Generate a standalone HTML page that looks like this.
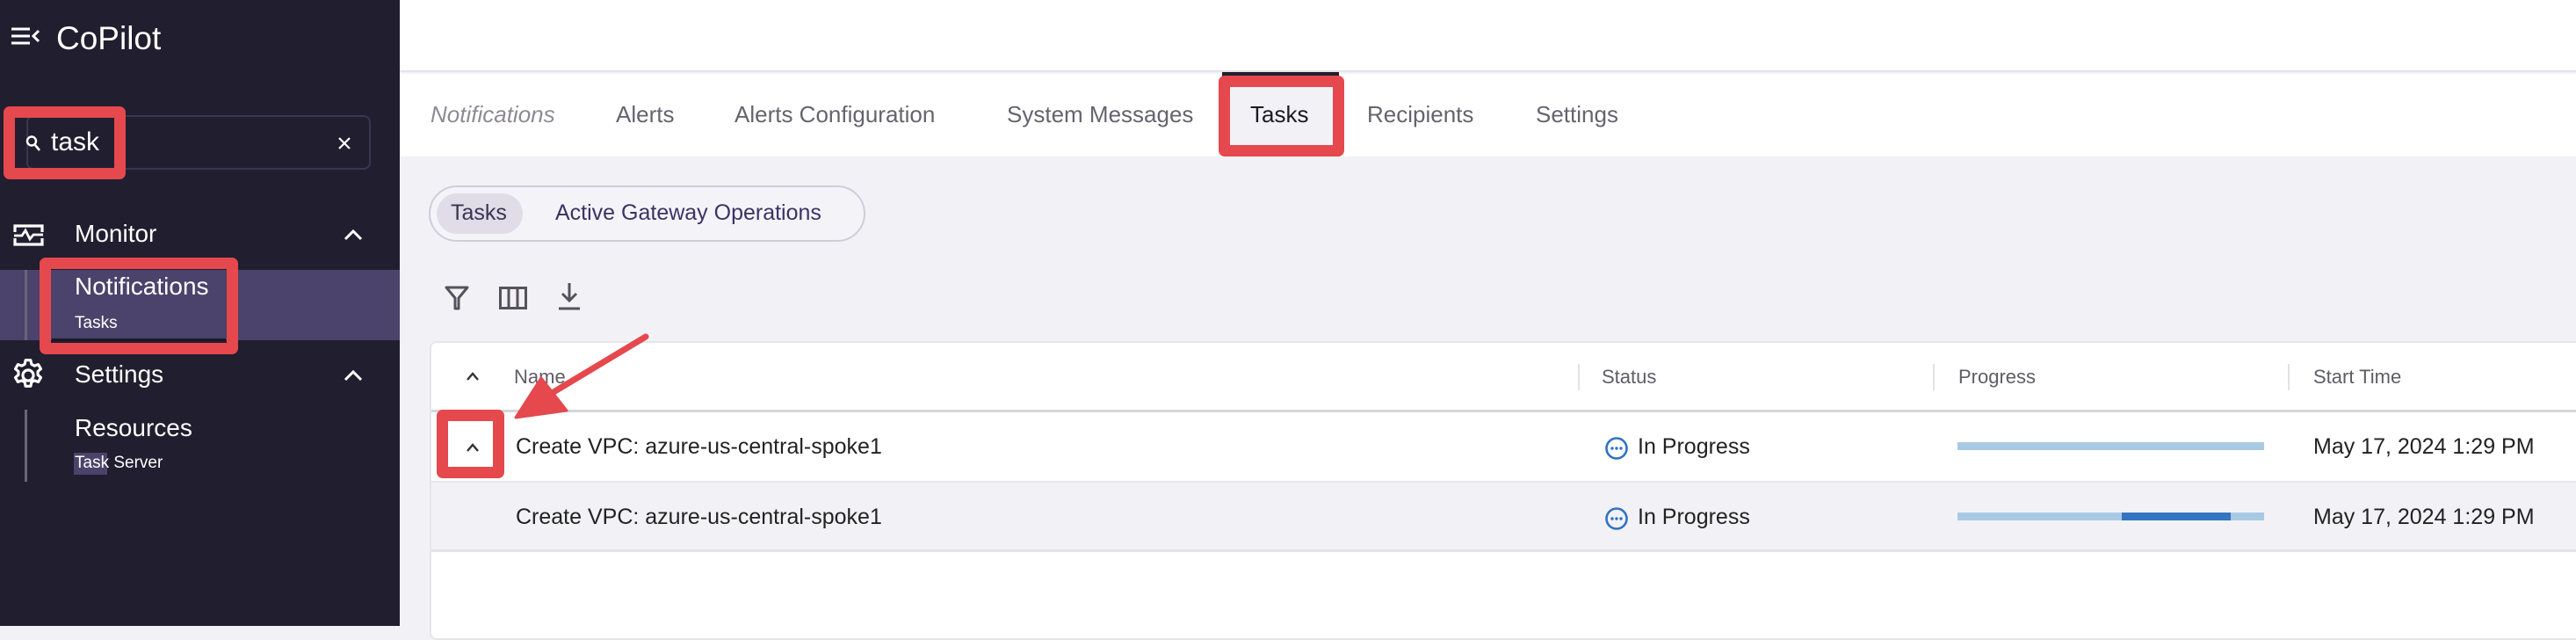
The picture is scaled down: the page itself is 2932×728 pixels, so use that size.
<!DOCTYPE html>
<html><head><meta charset="utf-8"><style>
*{margin:0;padding:0;box-sizing:border-box}
body{width:2932px;height:712px;position:relative;overflow:hidden;background:#f2f2f6;font-family:"Liberation Sans",sans-serif}
.a{position:absolute;white-space:nowrap}
.sb{left:0;top:0;width:455px;height:712px;background:#211e2f}
.w{color:#fff}
.red{position:absolute;border:13px solid #e5484d;border-radius:7px}
.tab{top:115px;font-size:26px;color:#66636f}
.hd{font-size:22px;color:#5f5c66;top:416px}
.cell{font-size:25px;color:#222}
</style></head><body>
<div class="a sb"></div>
<svg class="a" style="left:12px;top:31px" width="34" height="20" viewBox="0 0 34 20"><path d="M1 2h21M1 10h21M1 18h21" stroke="#fff" stroke-width="3"/><path d="M32 4l-6 6 6 6" stroke="#fff" stroke-width="3" fill="none"/></svg>
<div class="a w" style="left:64px;top:23px;font-size:37px">CoPilot</div>
<div class="a" style="left:30px;top:131px;width:392px;height:62px;border:2px solid #3a3552;border-radius:8px"></div>
<div class="red" style="left:4px;top:121px;width:139px;height:83px"></div>
<svg class="a" style="left:29px;top:153px" width="18" height="20" viewBox="0 0 18 20"><circle cx="7" cy="7.5" r="5" stroke="#fff" stroke-width="2.4" fill="none"/><path d="M11 12l5 6" stroke="#fff" stroke-width="2.6"/></svg>
<div class="a w" style="left:58px;top:145px;font-size:30px">task</div>
<svg class="a" style="left:384px;top:155px" width="16" height="16"><path d="M2 2l12 12M14 2L2 14" stroke="#fff" stroke-width="2.2"/></svg>
<svg class="a" style="left:15px;top:254px" width="35" height="27" viewBox="0 0 35 27"><path d="M2 10V3h31v7M2 17v7h31v-7" stroke="#fff" stroke-width="3.2" fill="none"/><path d="M1 14h9l4-6 5 10 4-5h11" stroke="#fff" stroke-width="2.8" fill="none"/></svg>
<div class="a w" style="left:85px;top:250px;font-size:28px">Monitor</div>
<svg class="a" style="left:391px;top:259px" width="22" height="16"><path d="M2 13l9-9 9 9" stroke="#fff" stroke-width="3" fill="none"/></svg>
<div class="a" style="left:0;top:307px;width:455px;height:80px;background:#4b436b"></div>
<div class="a" style="left:28px;top:307px;width:3px;height:80px;background:#6a6576"></div>
<div class="red" style="left:45px;top:293px;width:226px;height:110px"></div>
<div class="a" style="left:59px;top:385px;width:198px;height:3px;background:#1b1828"></div>
<div class="a w" style="left:85px;top:310px;font-size:28px">Notifications</div>
<div class="a w" style="left:85px;top:357px;font-size:19px">Tasks</div>
<svg class="a" style="left:12px;top:408px" width="40" height="38" viewBox="1 1 22 22"><path d="M12 8.5a3.5 3.5 0 1 0 0 7 3.5 3.5 0 0 0 0-7z M10.3 2h3.4l.5 2.6 2 1.1 2.5-.9 1.7 2.9-2 1.7v2.3l2 1.7-1.7 2.9-2.5-.9-2 1.1-.5 2.6h-3.4l-.5-2.6-2-1.1-2.5.9-1.7-2.9 2-1.7V9.4l-2-1.7 1.7-2.9 2.5.9 2-1.1z" stroke="#fff" stroke-width="1.8" fill="none" stroke-linejoin="round"/></svg>
<div class="a w" style="left:85px;top:410px;font-size:28px">Settings</div>
<svg class="a" style="left:391px;top:419px" width="22" height="16"><path d="M2 13l9-9 9 9" stroke="#fff" stroke-width="3" fill="none"/></svg>
<div class="a" style="left:28px;top:466px;width:3px;height:82px;background:#6a6576"></div>
<div class="a w" style="left:85px;top:471px;font-size:28px">Resources</div>
<div class="a" style="left:84px;top:515px;width:38px;height:25px;background:#4b436b"></div>
<div class="a w" style="left:85px;top:516px;font-size:19px">Task Server</div>

<div class="a" style="left:455px;top:0;width:2477px;height:82px;background:#fff;border-bottom:2px solid #e4e4e8"></div>
<div class="a" style="left:455px;top:84px;width:2477px;height:94px;background:#fff"></div>
<div class="a" style="left:1391px;top:82px;width:133px;height:6px;background:#211e2f"></div>
<div class="a tab" style="left:490px;font-style:italic;color:#8d8a94">Notifications</div>
<div class="a tab" style="left:701px">Alerts</div>
<div class="a tab" style="left:836px">Alerts Configuration</div>
<div class="a tab" style="left:1146px">System Messages</div>
<div class="a" style="left:1400px;top:97px;width:117px;height:68px;background:#f2f2f6"></div>
<div class="red" style="left:1387px;top:86px;width:143px;height:92px"></div>
<div class="a tab" style="left:1423px;color:#1b1a22">Tasks</div>
<div class="a tab" style="left:1556px">Recipients</div>
<div class="a tab" style="left:1748px">Settings</div>

<div class="a" style="left:488px;top:211px;width:497px;height:64px;border:2px solid #cfcdd6;border-radius:32px;background:#f4f4f8"></div>
<div class="a" style="left:497px;top:220px;width:98px;height:46px;border-radius:23px;background:#e0dde9"></div>
<div class="a" style="left:513px;top:228px;font-size:25px;color:#3a3450">Tasks</div>
<div class="a" style="left:632px;top:228px;font-size:25px;color:#3c3264">Active Gateway Operations</div>

<svg class="a" style="left:505px;top:324px" width="30" height="30" viewBox="0 0 30 30"><path d="M3 3h24l-10 12v12h-4V15z" fill="none" stroke="#55525c" stroke-width="3" stroke-linejoin="round"/></svg>
<svg class="a" style="left:568px;top:326px" width="32" height="26"><rect x="1.5" y="1.5" width="29" height="23" fill="none" stroke="#55525c" stroke-width="3"/><path d="M11 2v22M21 2v22" stroke="#55525c" stroke-width="3"/></svg>
<svg class="a" style="left:635px;top:320px" width="26" height="34"><path d="M13 2v20M5 14l8 8 8-8" fill="none" stroke="#55525c" stroke-width="3"/><path d="M1 31h24" stroke="#55525c" stroke-width="3"/></svg>

<div class="a" style="left:489px;top:388px;width:2450px;height:340px;background:#fff;border:2px solid #e6e6ea;border-radius:8px"></div>
<div class="a" style="left:491px;top:466px;width:2441px;height:3px;background:#d6d6dc"></div>
<div class="a" style="left:491px;top:547px;width:2441px;height:81px;background:#f2f2f6;border-top:2px solid #e6e6ea;border-bottom:3px solid #e4e4e8"></div>
<svg class="a" style="left:530px;top:422px" width="16" height="12"><path d="M2 10l6-7 6 7" stroke="#333" stroke-width="2.4" fill="none"/></svg>
<div class="a hd" style="left:585px">Name</div>
<div class="a" style="left:1796px;top:414px;width:2px;height:30px;background:#e2e2e6"></div>
<div class="a" style="left:2200px;top:414px;width:2px;height:30px;background:#e2e2e6"></div>
<div class="a" style="left:2604px;top:414px;width:2px;height:30px;background:#e2e2e6"></div>
<div class="a hd" style="left:1823px">Status</div>
<div class="a hd" style="left:2229px">Progress</div>
<div class="a hd" style="left:2633px">Start Time</div>

<div class="a cell" style="left:587px;top:494px">Create VPC: azure-us-central-spoke1</div>
<div class="a cell" style="left:587px;top:574px">Create VPC: azure-us-central-spoke1</div>
<svg class="a" style="left:1826px;top:496px" width="28" height="28"><circle cx="14" cy="14" r="11.5" fill="none" stroke="#2f72c4" stroke-width="2.6"/><circle cx="9" cy="14" r="1.7" fill="#2f72c4"/><circle cx="14" cy="14" r="1.7" fill="#2f72c4"/><circle cx="19" cy="14" r="1.7" fill="#2f72c4"/></svg>
<svg class="a" style="left:1826px;top:576px" width="28" height="28"><circle cx="14" cy="14" r="11.5" fill="none" stroke="#2f72c4" stroke-width="2.6"/><circle cx="9" cy="14" r="1.7" fill="#2f72c4"/><circle cx="14" cy="14" r="1.7" fill="#2f72c4"/><circle cx="19" cy="14" r="1.7" fill="#2f72c4"/></svg>
<div class="a cell" style="left:1864px;top:494px">In Progress</div>
<div class="a cell" style="left:1864px;top:574px">In Progress</div>
<div class="a" style="left:2228px;top:503px;width:349px;height:9px;background:#a8c9e4"></div>
<div class="a" style="left:2228px;top:583px;width:349px;height:9px;background:#a8c9e4"></div>
<div class="a" style="left:2415px;top:583px;width:124px;height:9px;background:#3474c0"></div>
<div class="a cell" style="left:2633px;top:494px">May 17, 2024 1:29 PM</div>
<div class="a cell" style="left:2633px;top:574px">May 17, 2024 1:29 PM</div>

<div class="red" style="left:497px;top:466px;width:77px;height:78px;background:#fff"></div>
<svg class="a" style="left:530px;top:503px" width="16" height="12"><path d="M2 10l6-7 6 7" stroke="#333" stroke-width="2.4" fill="none"/></svg>

<svg class="a" style="left:560px;top:370px" width="200" height="130" viewBox="560 370 200 130"><path d="M735 383L620 452" stroke="#e5484d" stroke-width="7" stroke-linecap="round"/><path d="M587 475L616 430L645 467Z" fill="#e5484d" stroke="#e5484d" stroke-width="3" stroke-linejoin="round"/></svg>
</body></html>
